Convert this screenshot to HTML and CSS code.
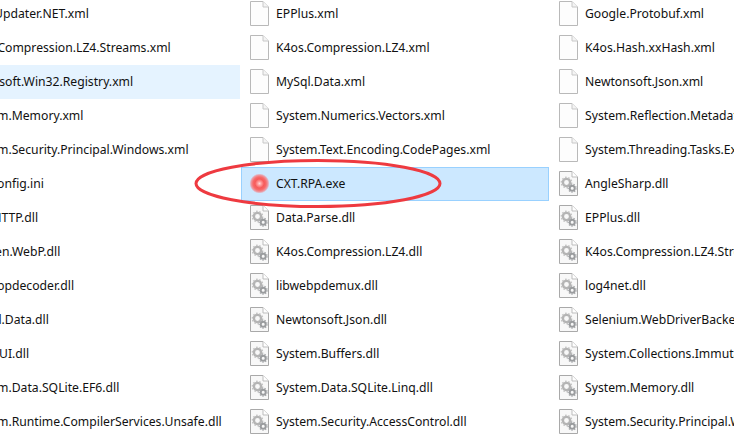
FILE: index.html
```html
<!DOCTYPE html>
<html lang="en">
<head>
<meta charset="utf-8">
<title>Files</title>
<link rel="stylesheet" href="styles.css">
</head>
<body>
<svg class="defs" width="0" height="0" aria-hidden="true">
  <symbol id="doc" viewBox="0 0 19 25">
    <path d="M.5.5H13L18.5 6V24.5H.5Z" fill="#fdfdfd" stroke="#b9b9b9"/>
    <path d="M13 .5V6H18.5" fill="#f4f4f4" stroke="#c8c8c8"/>
  </symbol>
  <symbol id="dll" viewBox="0 0 19 25">
    <path d="M.5.5H13L18.5 6V24.5H.5Z" fill="#f8f8f8" stroke="#a9a9a9"/>
    <path d="M13 .5V6H18.5" fill="#fff" stroke="#bdbdbd"/>
    <circle cx="7.5" cy="11.5" r="3.6" fill="none" stroke="#b4b4b4" stroke-width="2.4"/>
    <circle cx="7.5" cy="11.5" r="5.2" fill="none" stroke="#c4c4c4" stroke-width="1.4" stroke-dasharray="1.6 1.6"/>
    <circle cx="13.2" cy="17.2" r="2.5" fill="none" stroke="#9a9c9e" stroke-width="2"/>
    <circle cx="13.2" cy="17.2" r="4" fill="none" stroke="#a8aaac" stroke-width="1.2" stroke-dasharray="1.4 1.4"/>
  </symbol>
</svg>
<main class="view">
  <div class="grid">
    <div class="item"><svg class="icon"><use href="#doc"/></svg><span>AutoUpdater.NET.xml</span></div>
    <div class="item"><svg class="icon"><use href="#doc"/></svg><span>EPPlus.xml</span></div>
    <div class="item"><svg class="icon"><use href="#doc"/></svg><span>Google.Protobuf.xml</span></div>

    <div class="item"><svg class="icon"><use href="#doc"/></svg><span>K4os.Compression.LZ4.Streams.xml</span></div>
    <div class="item"><svg class="icon"><use href="#doc"/></svg><span>K4os.Compression.LZ4.xml</span></div>
    <div class="item"><svg class="icon"><use href="#doc"/></svg><span>K4os.Hash.xxHash.xml</span></div>

    <div class="item hover"><svg class="icon"><use href="#doc"/></svg><span>Microsoft.Win32.Registry.xml</span></div>
    <div class="item"><svg class="icon"><use href="#doc"/></svg><span>MySql.Data.xml</span></div>
    <div class="item"><svg class="icon"><use href="#doc"/></svg><span>Newtonsoft.Json.xml</span></div>

    <div class="item"><svg class="icon"><use href="#doc"/></svg><span>System.Memory.xml</span></div>
    <div class="item"><svg class="icon"><use href="#doc"/></svg><span>System.Numerics.Vectors.xml</span></div>
    <div class="item"><svg class="icon"><use href="#doc"/></svg><span>System.Reflection.Metadata.xml</span></div>

    <div class="item"><svg class="icon"><use href="#doc"/></svg><span>System.Security.Principal.Windows.xml</span></div>
    <div class="item"><svg class="icon"><use href="#doc"/></svg><span>System.Text.Encoding.CodePages.xml</span></div>
    <div class="item"><svg class="icon"><use href="#doc"/></svg><span>System.Threading.Tasks.Extensions.xml</span></div>

    <div class="item"><svg class="icon"><use href="#doc"/></svg><span>CXT.config.ini</span></div>
    <div class="item selected"><i class="glow"></i><span>CXT.RPA.exe</span></div>
    <div class="item"><svg class="icon"><use href="#dll"/></svg><span>AngleSharp.dll</span></div>

    <div class="item"><svg class="icon"><use href="#dll"/></svg><span>RPA.HTTP.dll</span></div>
    <div class="item"><svg class="icon"><use href="#dll"/></svg><span>Data.Parse.dll</span></div>
    <div class="item"><svg class="icon"><use href="#dll"/></svg><span>EPPlus.dll</span></div>

    <div class="item"><svg class="icon"><use href="#dll"/></svg><span>Imazen.WebP.dll</span></div>
    <div class="item"><svg class="icon"><use href="#dll"/></svg><span>K4os.Compression.LZ4.dll</span></div>
    <div class="item"><svg class="icon"><use href="#dll"/></svg><span>K4os.Compression.LZ4.Streams.dll</span></div>

    <div class="item"><svg class="icon"><use href="#dll"/></svg><span>libwebpdecoder.dll</span></div>
    <div class="item"><svg class="icon"><use href="#dll"/></svg><span>libwebpdemux.dll</span></div>
    <div class="item"><svg class="icon"><use href="#dll"/></svg><span>log4net.dll</span></div>

    <div class="item"><svg class="icon"><use href="#dll"/></svg><span>MySql.Data.dll</span></div>
    <div class="item"><svg class="icon"><use href="#dll"/></svg><span>Newtonsoft.Json.dll</span></div>
    <div class="item"><svg class="icon"><use href="#dll"/></svg><span>Selenium.WebDriverBackedSelenium.dll</span></div>

    <div class="item"><svg class="icon"><use href="#dll"/></svg><span>Semi-UI.dll</span></div>
    <div class="item"><svg class="icon"><use href="#dll"/></svg><span>System.Buffers.dll</span></div>
    <div class="item"><svg class="icon"><use href="#dll"/></svg><span>System.Collections.Immutable.dll</span></div>

    <div class="item"><svg class="icon"><use href="#dll"/></svg><span>System.Data.SQLite.EF6.dll</span></div>
    <div class="item"><svg class="icon"><use href="#dll"/></svg><span>System.Data.SQLite.Linq.dll</span></div>
    <div class="item"><svg class="icon"><use href="#dll"/></svg><span>System.Memory.dll</span></div>

    <div class="item"><svg class="icon"><use href="#dll"/></svg><span>System.Runtime.CompilerServices.Unsafe.dll</span></div>
    <div class="item"><svg class="icon"><use href="#dll"/></svg><span>System.Security.AccessControl.dll</span></div>
    <div class="item"><svg class="icon"><use href="#dll"/></svg><span>System.Security.Principal.Windows.dll</span></div>
  </div>
  <svg class="ring" viewBox="0 0 734 434" aria-hidden="true">
    <ellipse cx="318" cy="183.5" rx="122" ry="23" fill="none" stroke="#ee3a40" stroke-width="3"/>
  </svg>
</main>
</body>
</html>
```

FILE: styles.css
```css
* { box-sizing: border-box; }
html, body { margin: 0; height: 100%; background: #fff; }
.defs { position: absolute; }
.view {
  position: relative;
  width: 734px;
  height: 434px;
  overflow: hidden;
  font: 12.2px/1 "Noto Sans", "Open Sans", sans-serif;
  color: #111;
}
.grid {
  display: grid;
  grid-template-columns: repeat(3, 309px);
  grid-auto-rows: 34px;
  margin: -3px 0 0 -68px;
  width: 927px;
}
.item {
  display: flex;
  align-items: center;
  gap: 7px;
  padding-left: 8px;
  margin-right: 1px;
  border: 1px solid transparent;
  white-space: nowrap;
}
.icon { width: 19px; height: 25px; flex: none; margin-top: -2px; }
.hover { background: #e5f3ff; }
.selected { background: #cce8ff; border-color: #99d1ff; }
.glow {
  width: 19px;
  height: 25px;
  flex: none;
  margin-top: -1px;
  background: radial-gradient(circle at 50% 50%, #ffd8d8 0, #ff9a9a 2px, #f65a5a 4.5px, #f76a6a 6.5px, rgba(245,130,135,.75) 8.5px, rgba(204,232,255,0) 10px);
}
.ring { position: absolute; inset: 0; width: 734px; height: 434px; }
```
